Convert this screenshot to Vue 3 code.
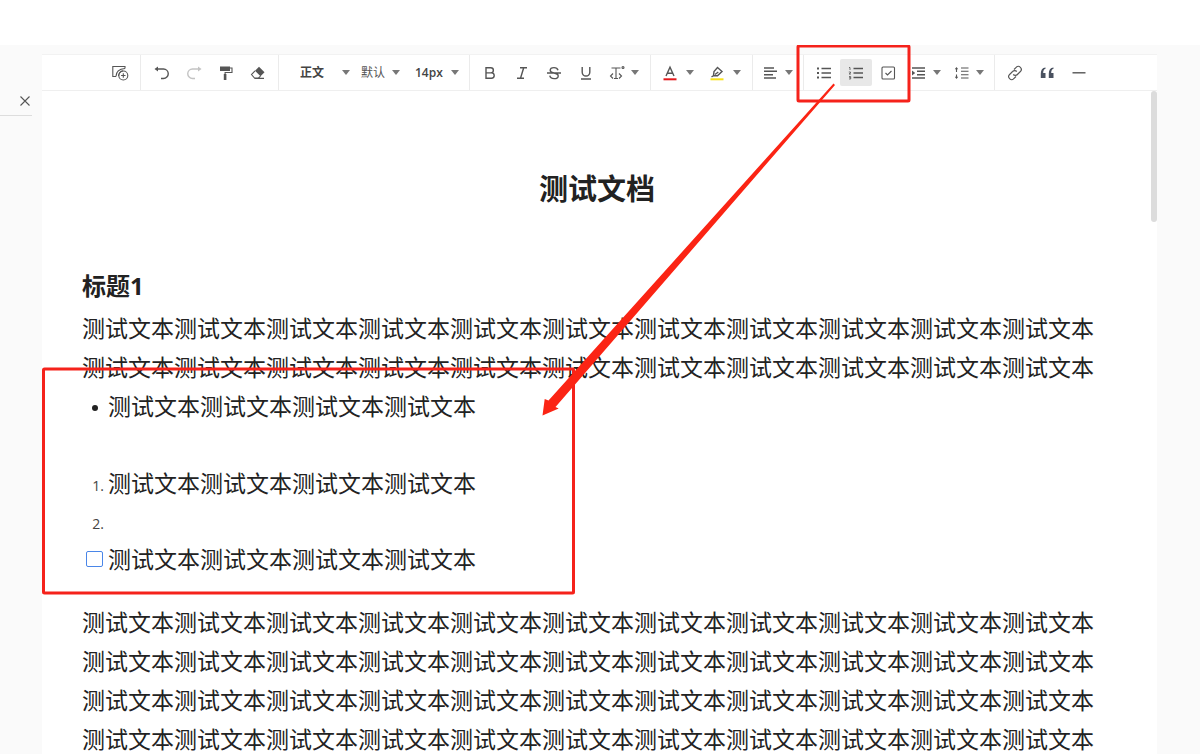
<script setup>
const sample = (count) => '测试文本'.repeat(count)
</script>

<template>
  <div class="app">
    <aside class="side">
      <div class="side-head">
        <button class="close" type="button" aria-label="关闭">
          <svg width="12" height="12" viewBox="0 0 12 12"><path d="M1.5 1.5l9 9M10.5 1.5l-9 9" /></svg>
        </button>
      </div>
    </aside>

    <main class="editor">
      <div class="toolbar" role="toolbar" aria-label="编辑工具">
        <div class="group first">
          <button class="tool" type="button" aria-label="插入">
            <svg class="thin" width="18" height="18" viewBox="0 0 18 18">
              <path d="M5 12.500H1.800V2.500H14V4.500" /><path d="M5 12.500C5 8 8 5 14 4.500M7.500 12C7.800 9 9.500 7.500 12 6.800" />
              <circle cx="12.300" cy="11.500" r="4.500" /><path d="M10.100 11.500h4.400M12.300 9.300v4.400" />
            </svg>
          </button>
        </div>

        <div class="group history">
          <button class="tool" type="button" aria-label="撤销">
            <svg width="16" height="16" viewBox="0 0 16 16"><path d="M2 4h7.500a4.500 4.500 0 0 1 0 9.500H7" /><path class="solid" d="M.5 4l3.500-2.500v5z" /></svg>
          </button>
          <button class="tool faded" type="button" aria-label="重做">
            <svg width="16" height="16" viewBox="0 0 16 16"><path d="M14 4H6.500a4.500 4.500 0 0 0 0 9.500H9" /><path class="solid" d="M15.500 4L12 1.500v5z" /></svg>
          </button>
          <button class="tool" type="button" aria-label="格式刷">
            <svg width="16" height="16" viewBox="0 0 16 16"><path class="solid" d="M2 1.500h10v4.500H2zM5.800 9h2.600v6H5.800z" /><path class="thin" d="M12 3h2v4.500H7.100V10" /></svg>
          </button>
          <button class="tool" type="button" aria-label="清除格式">
            <svg width="16" height="16" viewBox="0 0 16 16"><path class="solid" d="M9 1.800l5.500 5.400-4 4L5 5.800z" /><path class="thin" d="M5 5.800L1.500 9.500l3 3.500H8.500l2-1.800M4.500 13.400H14" /></svg>
          </button>
        </div>

        <div class="group picks">
          <label class="pick style strong"><select aria-label="段落样式"><option>正文</option></select><i class="caret"></i></label>
          <label class="pick family"><select aria-label="字体"><option>默认</option></select><i class="caret"></i></label>
          <label class="pick size strong"><select aria-label="字号"><option>14px</option></select><i class="caret"></i></label>
        </div>

        <div class="group">
          <button class="tool" type="button" aria-label="加粗">
            <svg width="16" height="16" viewBox="0 0 16 16"><path d="M4 2.800h4.800a2.500 2.500 0 0 1 0 5.100H4zM4 7.900h5.500a2.700 2.700 0 0 1 0 5.400H4z" /></svg>
          </button>
          <button class="tool" type="button" aria-label="斜体">
            <svg width="16" height="16" viewBox="0 0 16 16"><path d="M6 2.800h7M3 13.200h7M9.700 2.800L6.500 13.200" /></svg>
          </button>
          <button class="tool" type="button" aria-label="删除线">
            <svg width="16" height="16" viewBox="0 0 16 16"><path d="M1 8h14M12 5.300C11.500 3.400 10 2.600 8 2.600c-2.300 0-3.800 1-3.800 2.700C4.200 7 6 7.600 8 8c2.500.5 4.200 1.200 4.200 2.900 0 1.600-1.700 2.700-4.100 2.700-2.300 0-4-1-4.300-2.900" /></svg>
          </button>
          <button class="tool" type="button" aria-label="下划线">
            <svg width="16" height="16" viewBox="0 0 16 16"><path d="M4.200 2v5.200a3.800 3.800 0 0 0 7.600 0V2M3 14h10" /></svg>
          </button>
          <button class="tool combo c44" type="button" aria-label="更多文本样式">
            <svg class="thin" width="16" height="16" viewBox="0 0 16 16"><path d="M2.500 3h9M7 3v10.500M5 13.500h4M4 8.500L1.500 11 4 13.500M10 8.500l2.500 2.500-2.500 2.500" /><circle cx="14" cy="2.500" r="1" /></svg>
            <i class="caret"></i>
          </button>
        </div>

        <div class="group colors">
          <button class="tool combo wide" type="button" aria-label="文字颜色">
            <svg width="16" height="16" viewBox="0 0 16 16"><path d="M4 11L8 2.300 12 11M5.300 8.200h5.400" /><path class="red" d="M1.500 14.300h13" /></svg>
            <i class="caret"></i>
          </button>
          <button class="tool combo wide" type="button" aria-label="背景颜色">
            <svg width="16" height="16" viewBox="0 0 16 16"><path class="yellow" d="M1.500 14.300h13" /><path d="M8.500 2.500l4.500 4-4.500 4.300-4-.3.500-4zM5 10.500l-2.500 1.300M6 9.500L9.300 7" /></svg>
            <i class="caret"></i>
          </button>
        </div>

        <div class="group">
          <button class="tool combo" type="button" aria-label="对齐">
            <svg width="16" height="16" viewBox="0 0 16 16"><path d="M1 3h10M1 6.300h13M1 9.700h9M1 13h12" /></svg>
            <i class="caret"></i>
          </button>
        </div>

        <div class="group">
          <button class="tool" type="button" aria-label="无序列表">
            <svg width="16" height="16" viewBox="0 0 16 16"><path d="M5.500 3.500H15M5.500 8H15M5.500 12.500H15" /><path class="solid" d="M1 2.500h2v2H1zM1 7h2v2H1zM1 11.500h2v2H1z" /></svg>
          </button>
          <button class="tool active" type="button" aria-label="有序列表" aria-pressed="true">
            <svg width="16" height="16" viewBox="0 0 16 16"><path d="M5.500 3.500H15M5.500 8H15M5.500 12.500H15" /><path class="fine" d="M1 2.500h1v2.500M.8 7h1.700v1L1 9h2M1 11.500h1.700v2.500H1M1 12.700h1.700" /></svg>
          </button>
          <button class="tool" type="button" aria-label="任务列表">
            <svg class="thin" width="16" height="16" viewBox="0 0 16 16"><rect x="2" y="2" width="12.500" height="12" rx="1" /><path d="M5.500 8l2 2 4-4" /></svg>
          </button>
          <button class="tool combo c44" type="button" aria-label="缩进">
            <svg width="16" height="16" viewBox="0 0 16 16"><path d="M1 3h13M6 6.300h8M6 9.700h8M1 13h13" /><path class="solid" d="M1 5.500L4.200 8 1 10.500z" /></svg>
            <i class="caret"></i>
          </button>
          <button class="tool combo" type="button" aria-label="行高">
            <svg class="thin" width="16" height="16" viewBox="0 0 16 16"><path d="M7 3h7.500M7 6.300h7.500M7 9.700h7.500M7 13h7.500M2.500 3v4M2.500 9.500v3.500" /><path class="solid" d="M.8 4.200L2.500 2l1.700 2.200zM.8 11.800L2.500 14l1.700-2.200z" /></svg>
            <i class="caret"></i>
          </button>
        </div>

        <div class="group last">
          <button class="tool" type="button" aria-label="链接">
            <svg class="thin" width="16" height="16" viewBox="0 0 16 16"><path d="M7 4.500l2.200-2.200a2.900 2.900 0 0 1 4.200 4.200l-3 3a2.900 2.900 0 0 1-4.200 0M9 11.500l-2.200 2.200a2.900 2.900 0 0 1-4.200-4.200l3-3a2.900 2.900 0 0 1 4.200 0" /></svg>
          </button>
          <button class="tool" type="button" aria-label="引用">
            <svg class="quote" width="16" height="16" viewBox="0 0 16 16"><path d="M6.500 2.500v1.200C4.800 4.200 4.200 5.500 4.200 8h2.300v5H1.800V8.500C1.800 5 3.300 2.900 6.500 2.500zM14.500 2.500v1.200c-1.700.5-2.300 1.800-2.300 4.300h2.300v5H9.800V8.500c0-3.500 1.500-5.600 4.700-6z" /></svg>
          </button>
          <button class="tool" type="button" aria-label="分割线">
            <svg width="16" height="16" viewBox="0 0 16 16"><path d="M1.500 7.800h13" /></svg>
          </button>
        </div>
      </div>

      <article class="doc">
        <h1>测试文档</h1>
        <h2>标题1</h2>
        <p>{{ sample(22) }}</p>
        <ul>
          <li><span class="dot"></span>{{ sample(4) }}</li>
        </ul>
        <ol>
          <li><span class="num">1.</span>{{ sample(4) }}</li>
          <li><span class="num">2.</span></li>
        </ol>
        <label class="task"><input type="checkbox" /><span>{{ sample(4) }}</span></label>
        <p>{{ sample(44) }}</p>
        <div class="thumb"></div>
      </article>
    </main>

    <svg class="notes" width="1200" height="754" viewBox="0 0 1200 754" aria-hidden="true">
      <rect x="798" y="46" width="111" height="55" rx="1" />
      <rect x="43.500" y="369" width="530" height="224" rx="1" />
      <path d="M833.500 83.500L835 85 555.500 407 558.700 408.500 542.500 415.500 544.700 399 548.500 400.500z" />
    </svg>
  </div>
</template>

<style>
body {
  margin: 0;
}
</style>

<style scoped>
.app {
  position: relative;
  display: grid;
  grid-template-columns: 42px 1fr 43px;
  box-sizing: border-box;
  height: 100vh;
  overflow: hidden;
  border-top: 45px solid #fff;
  background: #fafafa;
  color: #222;
  font-family: "Open Sans", "Noto Sans CJK SC", sans-serif;
}

.side-head {
  display: flex;
  justify-content: flex-end;
  align-items: center;
  width: 32px;
  height: 29px;
  margin-top: 41px;
  border-bottom: 1px solid #ddd;
}

button {
  padding: 0;
  border: 0;
  background: none;
}

.close {
  display: flex;
  padding: 0 1px;
}

svg {
  display: block;
  flex: none;
  fill: none;
  stroke: #555;
  stroke-width: 1.4;
}

.close svg,
svg.thin,
path.thin {
  stroke-width: 1.1;
}

.fine {
  stroke-width: 0.8;
}

.solid {
  fill: #555;
  stroke: none;
}

.red {
  stroke: #e3191c;
  stroke-width: 2;
}

.yellow {
  stroke: #f7e11b;
  stroke-width: 2;
}

svg.quote {
  fill: #4a5260;
  stroke: none;
}

.editor {
  display: flex;
  flex-direction: column;
  min-width: 0;
  min-height: 0;
  padding-top: 9px;
}

.toolbar {
  display: flex;
  flex: none;
  height: 35px;
  border-top: 1px solid #f2f2f2;
  border-bottom: 1px solid #efefef;
  background: #fff;
}

.group {
  display: flex;
  align-items: center;
  padding: 0 4px;
  border-right: 1px solid #ebebeb;
}

.first {
  padding-left: 62px;
}

.history {
  padding-left: 5px;
}

.colors {
  gap: 1px;
}

.last {
  border-right: 0;
}

.tool {
  display: flex;
  align-items: center;
  justify-content: center;
  width: 32px;
  height: 27px;
  border-radius: 2px;
}

.combo {
  gap: 6px;
  width: 42px;
}

.c44 {
  width: 44px;
}

.wide {
  gap: 8px;
  width: 46px;
}

.faded {
  opacity: 0.35;
}

.active {
  background: #e8e8e8;
}

.caret {
  flex: none;
  border: 4px solid transparent;
  border-top: 5px solid #777;
  border-bottom: 0;
}

.picks {
  padding: 0 10px 0 21px;
}

.pick {
  display: flex;
  align-items: center;
}

.style {
  width: 50px;
  margin-right: 11px;
}

.family {
  width: 39px;
  margin-right: 15px;
}

.size {
  width: 44px;
}

select {
  flex: 1;
  min-width: 0;
  padding: 0;
  border: 0;
  appearance: none;
  background: none;
  color: #555;
  font: 12px/20px "Open Sans", "Noto Sans CJK SC", sans-serif;
}

.strong select {
  color: #444;
  font-weight: 600;
}

.doc {
  position: relative;
  flex: 1;
  min-height: 0;
  overflow: hidden;
  padding: 77px 45px 0 40px;
  background: #fff;
  font-size: 23px;
  line-height: 39px;
}

h1,
h2,
p,
ul,
ol {
  margin: 0;
  padding: 0;
}

h1 {
  font-size: 29px;
  line-height: 42px;
  text-align: center;
}

h2 {
  margin-top: 56px;
  font-size: 24px;
  line-height: 40px;
}

p {
  margin-top: 3px;
  word-break: break-all;
}

ul {
  margin-bottom: 39px;
}

li,
.task {
  display: flex;
  align-items: center;
  height: 38px;
}

.dot {
  width: 6px;
  height: 6px;
  margin: 4px 10px 0;
  border-radius: 50%;
  background: #222;
}

.num {
  box-sizing: border-box;
  width: 26px;
  padding: 4px 4px 0 0;
  color: #444;
  font-size: 14px;
  text-align: right;
}

.task input {
  box-sizing: border-box;
  width: 17px;
  height: 16px;
  margin: 0 5px 0 4px;
  border: 1px solid #4a86e8;
  border-radius: 2px;
  appearance: none;
  background: #fff;
}

.task + p {
  margin-top: 25px;
}

.thumb {
  position: absolute;
  top: 0;
  right: 0;
  width: 6px;
  height: 131px;
  border-radius: 3px;
  background: #dcdcdc;
}

.notes {
  position: absolute;
  top: -45px;
  left: 0;
  stroke: #f5221b;
  stroke-width: 3;
  pointer-events: none;
}

.notes path {
  fill: #fb2414;
  stroke: none;
}
</style>
